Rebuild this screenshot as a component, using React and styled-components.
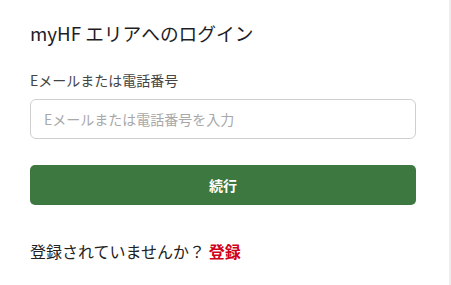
import styled, { createGlobalStyle } from "styled-components";

const GlobalStyle = createGlobalStyle`
  html, body {
    margin: 0;
    padding: 0;
    background: #fff;
  }
  body {
    font-family: "Noto Sans CJK JP", "Noto Sans", sans-serif;
  }
`;

const Page = styled.div`
  display: flex;
  width: 451px;
  height: 285px;
  overflow: hidden;
`;

const Panel = styled.div`
  flex: 1;
  padding: 21px 33px 0 30px;
  display: flex;
  flex-direction: column;
`;

const Edge = styled.div`
  width: 2px;
  background: #ededed;
`;

const Title = styled.h1`
  margin: 0;
  font-size: 18.7px;
  line-height: 24px;
  font-weight: 400;
  color: #1d1d26;
`;

const Label = styled.label`
  margin-top: 25px;
  font-size: 14px;
  line-height: 20px;
  color: #444;
`;

const Input = styled.input`
  box-sizing: border-box;
  margin-top: 9px;
  width: 100%;
  height: 40px;
  padding: 0 13px;
  border: 1px solid #cfcfcf;
  border-radius: 6px;
  font-family: inherit;
  font-size: 14px;
  color: #333;
  outline: none;

  &::placeholder {
    color: #a8a8a8;
  }
`;

const Button = styled.button`
  margin-top: 26px;
  height: 40px;
  border: none;
  border-radius: 5px;
  background: #3d7840;
  color: #fff;
  font-family: inherit;
  font-size: 14px;
  font-weight: 700;
  cursor: pointer;
`;

const Footer = styled.p`
  margin: 34px 0 0;
  font-size: 16px;
  line-height: 24px;
  color: #222;
`;

const Link = styled.a`
  color: #d0021b;
  font-weight: 700;
  text-decoration: none;
`;

const App = () => {
  return (
    <>
      <GlobalStyle />
      <Page>
        <Panel>
          <Title>myHF エリアへのログイン</Title>
          <Label htmlFor="login-id">Eメールまたは電話番号</Label>
          <Input id="login-id" placeholder="Eメールまたは電話番号を入力" />
          <Button>続行</Button>
          <Footer>
            登録されていませんか？ <Link href="#">登録</Link>
          </Footer>
        </Panel>
        <Edge />
      </Page>
    </>
  );
};

export default App;
